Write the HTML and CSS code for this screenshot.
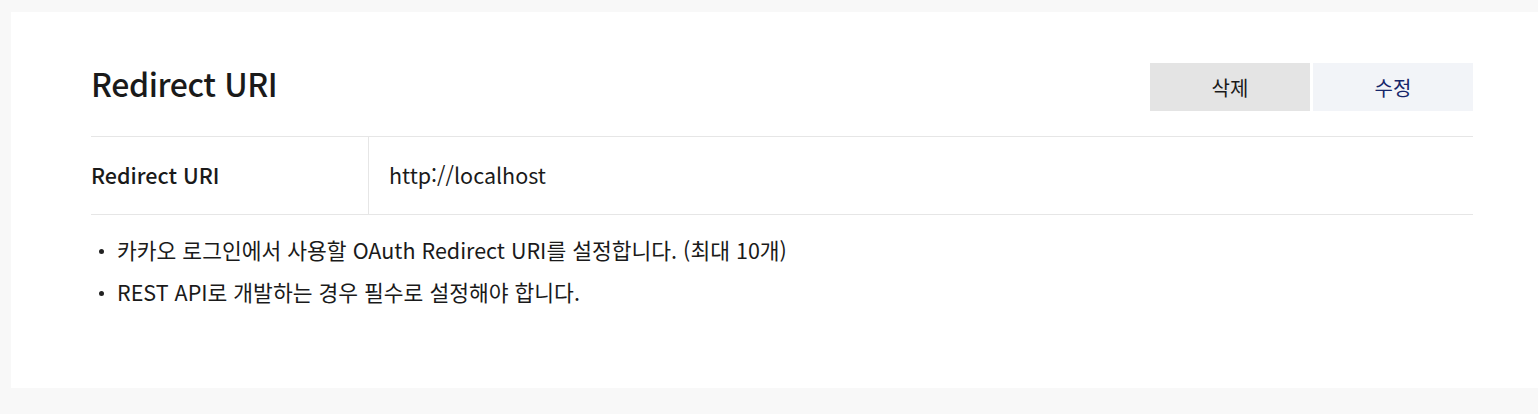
FILE: index.html
```html
<!DOCTYPE html>
<html lang="ko">
<head>
<meta charset="utf-8">
<link rel="stylesheet" href="styles.css">
</head>
<body>
<section class="card">
  <div class="head">
    <h2 class="title">Redirect URI</h2>
    <div class="actions">
      <button class="btn btn-del">삭제</button>
      <button class="btn btn-edit">수정</button>
    </div>
  </div>
  <div class="row">
    <div class="label">Redirect URI</div>
    <div class="value">http://localhost</div>
  </div>
  <ul class="notes">
    <li>카카오 로그인에서 사용할 OAuth Redirect URI를 설정합니다. (최대 10개)</li>
    <li>REST API로 개발하는 경우 필수로 설정해야 합니다.</li>
  </ul>
</section>
</body>
</html>
```
FILE: styles.css
```css
html, body {
  margin: 0;
  padding: 0;
  background: #f8f8f8;
  font-family: "Noto Sans CJK KR", "Noto Sans", sans-serif;
  color: #1a1a1a;
}
body {
  padding: 12px 0 26px 11px;
}
.card {
  background: #fff;
  padding: 51px 65px 0 80px;
  height: 325px;
}
.head {
  display: flex;
  align-items: flex-start;
  justify-content: space-between;
  height: 48px;
  padding-bottom: 25px;
  border-bottom: 1px solid #e6e6e6;
}
.title {
  margin: 0;
  font-size: 32px;
  line-height: 40px;
  font-weight: 500;
  letter-spacing: -0.4px;
  color: #1a1a1a;
}
.actions {
  display: flex;
  gap: 3px;
}
.btn {
  width: 160px;
  height: 48px;
  border: 0;
  font-family: inherit;
  font-size: 20px;
  padding: 0;
}
.btn-del {
  background: #e4e4e4;
  color: #1a1a1a;
}
.btn-edit {
  background: #f2f4f8;
  color: #16266a;
}
.row {
  display: flex;
  height: 77px;
  border-bottom: 1px solid #e6e6e6;
}
.label {
  width: 277px;
  border-right: 1px solid #e6e6e6;
  display: flex;
  align-items: center;
  padding-bottom: 3px;
  font-size: 21.5px;
  font-weight: 500;
}
.value {
  display: flex;
  align-items: center;
  padding-left: 20px;
  padding-bottom: 3px;
  font-size: 21.5px;
}
.notes {
  list-style: none;
  margin: 0;
  padding: 14px 0 0 8px;
}
.notes li {
  position: relative;
  padding-left: 18px;
  font-size: 21.5px;
  line-height: 42px;
}
.notes li::before {
  content: "";
  position: absolute;
  left: 0;
  top: 20px;
  width: 5px;
  height: 5px;
  border-radius: 50%;
  background: #222;
}
```
